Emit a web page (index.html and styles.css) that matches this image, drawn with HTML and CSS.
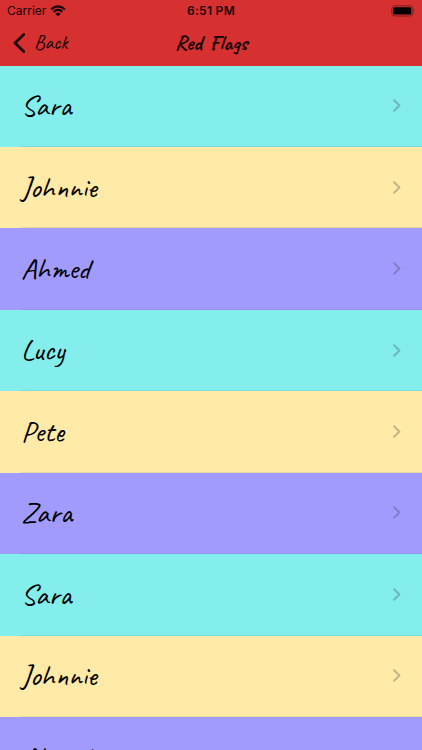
FILE: index.html
```
<!DOCTYPE html>
<html lang="en">
<head>
    <meta charset="UTF-8">
    <meta name="viewport" content="width=device-width, initial-scale=1">
    <title>Red Flags</title>
    <link rel="stylesheet" href="styles.css">
</head>
<body>
    <header>
        <div class="status-bar">
            <div class="carrier">
                <span>Carrier</span>
                <svg class="wifi" width="16" height="12" viewBox="0 0 16 12">
                    <path d="M1.2 4.4Q8 -1.7 14.8 4.4M3.6 6.9Q8 3 12.4 6.9" fill="none" stroke="#170405" stroke-width="2.1"/>
                    <path d="M5.3 8.8Q8 6.6 10.7 8.8L8 11.5Z" fill="#170405"/>
                </svg>
            </div>
            <div class="time">6:51 PM</div>
            <svg class="battery" width="25" height="12" viewBox="0 0 25 12">
                <rect x="1.8" y=".8" width="21" height="10.2" rx="2.8" fill="none" stroke="#7d1d1f"/>
                <rect x="3.3" y="2.3" width="18" height="7.2" rx="1.3" fill="#000"/>
                <path d="M23.8 4.1q1.4 1.8 0 3.6z" fill="#7d1d1f"/>
            </svg>
        </div>
        <nav class="nav-bar">
            <a class="back" href="#">
                <svg width="13" height="20" viewBox="0 0 13 20">
                    <path d="M10.7 1.5L2 10l8.7 8.5" fill="none" stroke="#170405" stroke-width="2.6" stroke-linecap="round" stroke-linejoin="round"/>
                </svg>
                <span>Back</span>
            </a>
            <h1>Red Flags</h1>
        </nav>
    </header>

    <ul class="list">
        <li class="aqua">Sara</li>
        <li class="yellow">Johnnie</li>
        <li class="purple">Ahmed</li>
        <li class="aqua">Lucy</li>
        <li class="yellow">Pete</li>
        <li class="purple">Zara</li>
        <li class="aqua">Sara</li>
        <li class="yellow">Johnnie</li>
        <li class="purple">Ahmed</li>
    </ul>

    <script>
        // disclosure arrow on every row
        document.querySelectorAll('.list li').forEach((row) => {
            row.insertAdjacentHTML('beforeend',
                '<svg class="arrow" width="9" height="14" viewBox="0 0 9 14"><path d="M2.1 2.3L7.4 7.5l-5.3 5.2"/></svg>');
        });
    </script>
</body>
</html>
```
FILE: styles.css
```
* {
    box-sizing: border-box;
}

body {
    margin: 0;
    height: 100vh;
    overflow: hidden;
    font-family: Caveat, Lato, cursive;
    color: #000;
}

header {
    height: 65.5px;
    background-color: #d63031;
    color: #170405;
}

.status-bar {
    display: grid;
    grid-template-columns: 1fr auto 1fr;
    align-items: center;
    height: 21px;
    padding: 0 7px;
    font-family: Inter, sans-serif;
    font-size: 12px;
}

.carrier {
    display: flex;
    align-items: center;
    gap: 4px;
}

.time {
    font-weight: 600;
    letter-spacing: 0.3px;
}

.battery {
    justify-self: end;
}

.nav-bar {
    display: grid;
    grid-template-columns: 1fr auto 1fr;
    align-items: center;
    height: 44px;
    padding: 0 13px;
}

.back {
    display: flex;
    align-items: center;
    gap: 8px;
    color: inherit;
    font-size: 20px;
    text-decoration: none;
}

.back span {
    padding-bottom: 2px;
}

h1 {
    margin: 0;
    padding-bottom: 2px;
    font-size: 21.5px;
    font-weight: 700;
    word-spacing: 2px;
}

.list {
    margin: 0;
    padding: 0;
    list-style: none;
}

.list li {
    display: flex;
    align-items: center;
    justify-content: space-between;
    height: 81.45px;
    padding: 0 21px 2px 21px;
    background-image: linear-gradient(rgba(60, 60, 67, 0.1), rgba(60, 60, 67, 0.1));
    background-repeat: no-repeat;
    background-position: 20px 100%;
    background-size: 100% 1px;
    font-size: 30px;
    font-weight: 500;
}

.aqua {
    background-color: #84eeec;
}

.yellow {
    background-color: #ffeaa7;
}

.purple {
    background-color: #a29bfe;
}

.arrow {
    fill: none;
    stroke: rgba(60, 60, 67, 0.3);
    stroke-width: 2;
    stroke-linecap: round;
    stroke-linejoin: round;
}
```
